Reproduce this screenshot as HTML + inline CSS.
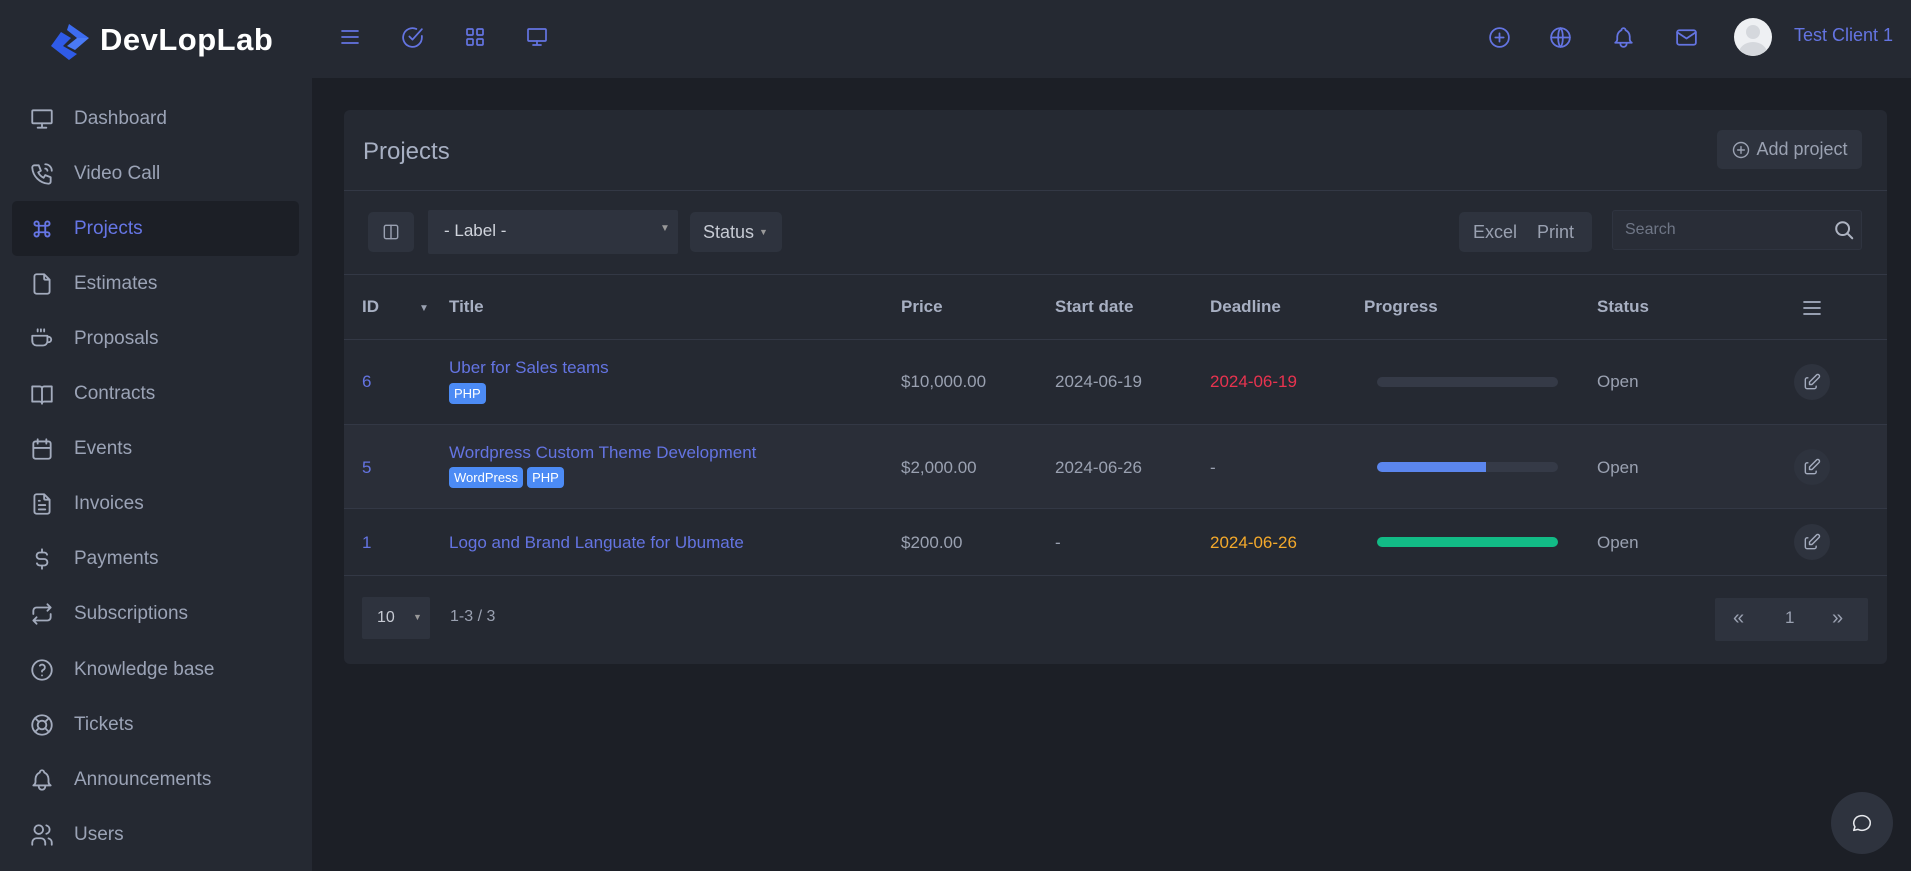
<!DOCTYPE html>
<html><head><meta charset="utf-8"><style>
*{box-sizing:border-box;margin:0;padding:0}
body{width:1911px;height:871px;overflow:hidden;background:#1c1f26;font-family:"Liberation Sans",sans-serif;color:#9aa1b1;position:relative}
.a{position:absolute}
svg{fill:none;stroke:currentColor;stroke-width:1.7;stroke-linecap:round;stroke-linejoin:round}
#top{left:0;top:0;width:1911px;height:78px;background:#252932}
#side{left:0;top:78px;width:312px;height:793px;background:#252932}
.ni{position:absolute;left:12px;width:287px;height:55px;display:flex;align-items:center;font-size:19px;color:#9ba3b6}
.ni svg{width:26px;height:26px;margin-left:17px;margin-right:19px;color:#a3abbd}
.ni.act{background:#1c1f26;border-radius:5px;color:#6676e6}
.ni.act svg{color:#6676e6}
#card{left:344px;top:110px;width:1543px;height:554px;background:#252932;border-radius:6px}
.hl{position:absolute;left:0;width:1543px;height:1px;background:#333845}
.btn{position:absolute;background:#2e333e;border-radius:5px}
.th{position:absolute;top:297px;font-weight:bold;font-size:17px;color:#a7afc2}
.td{position:absolute;font-size:17px;color:#9aa1b1}
.lk{color:#6474e2}
.tag{display:inline-block;background:#4c8bf5;color:#fff;font-size:13px;padding:3px 5px;border-radius:4px;margin-right:4px}
.ic{color:#6474e2}
.bar{position:absolute;left:1377px;width:181px;height:10px;border-radius:5px;background:#353a47;overflow:hidden}
.ed{position:absolute;left:1794px;width:36px;height:36px;border-radius:50%;background:#2e333e;display:flex;align-items:center;justify-content:center;color:#a3abbd}
</style></head><body>
<div id="top" class="a">
 <svg class="a" style="left:49px;top:24px;width:44px;height:36px;stroke:none" viewBox="0 0 44 36"><path d="M20 0L40 14L28 14L18 6Z" fill="#3d6cf0"/><path d="M12 8L22 14L14 22L28 30L20 36L2 22Z" fill="#2f5be8"/><path d="M28 14L40 14L26 26L18 22Z" fill="#4a7af5"/></svg>
 <div class="a" style="left:100px;top:22px;font-size:31px;font-weight:bold;color:#fff;letter-spacing:0.5px">DevLopLab</div>
 <svg class="a ic" style="left:338px;top:25px;width:24px;height:24px" viewBox="0 0 24 24"><path d="M4 6h16M4 12h16M4 18h16"/></svg>
 <svg class="a ic" style="left:400px;top:25px;width:25px;height:25px" viewBox="0 0 24 24"><path d="M21 10.5V12a9 9 0 1 1-5.3-8.2"/><path d="M9 11l3 3 9-10"/></svg>
 <svg class="a ic" style="left:463px;top:25px;width:24px;height:24px" viewBox="0 0 24 24"><rect x="4" y="4" width="6" height="6" rx="1"/><rect x="14" y="4" width="6" height="6" rx="1"/><rect x="4" y="14" width="6" height="6" rx="1"/><rect x="14" y="14" width="6" height="6" rx="1"/></svg>
 <svg class="a ic" style="left:525px;top:25px;width:24px;height:24px" viewBox="0 0 24 24"><rect x="3" y="4" width="18" height="12" rx="1"/><path d="M8 20h8M12 16v4"/></svg>
 <svg class="a ic" style="left:1487px;top:25px;width:25px;height:25px" viewBox="0 0 24 24"><circle cx="12" cy="12" r="9"/><path d="M12 8v8M8 12h8"/></svg>
 <svg class="a ic" style="left:1548px;top:25px;width:25px;height:25px" viewBox="0 0 24 24"><circle cx="12" cy="12" r="9"/><path d="M3 12h18M12 3c3 3 3 15 0 18M12 3c-3 3-3 15 0 18"/></svg>
 <svg class="a ic" style="left:1611px;top:25px;width:25px;height:25px" viewBox="0 0 24 24"><path d="M10 5a2 2 0 1 1 4 0 7 7 0 0 1 4 6v3a4 4 0 0 0 2 3H4a4 4 0 0 0 2-3v-3a7 7 0 0 1 4-6M9 17v1a3 3 0 0 0 6 0v-1"/></svg>
 <svg class="a ic" style="left:1674px;top:25px;width:25px;height:25px" viewBox="0 0 24 24"><rect x="3" y="5" width="18" height="14" rx="2"/><path d="M3 7l9 6 9-6"/></svg>
 <div class="a" style="left:1734px;top:18px;width:38px;height:38px;border-radius:50%;background:#eef0f3;overflow:hidden"><div class="a" style="left:12px;top:7px;width:14px;height:14px;border-radius:50%;background:#d5d8dd"></div><div class="a" style="left:5px;top:24px;width:28px;height:22px;border-radius:50%;background:#d5d8dd"></div></div>
 <div class="a" style="left:1794px;top:25px;font-size:18px;color:#6474e2">Test Client 1</div>
</div>
<div id="side" class="a">
 <div class="ni" style="top:13px"><svg viewBox="0 0 24 24"><rect x="3" y="4" width="18" height="12" rx="1"/><path d="M8 20h8M12 16v4"/></svg>Dashboard</div>
 <div class="ni" style="top:68px"><svg viewBox="0 0 24 24"><path d="M5 4h4l2 5-2.5 1.5a11 11 0 0 0 5 5L15 13l5 2v4a2 2 0 0 1-2 2A16 16 0 0 1 3 6a2 2 0 0 1 2-2M15 3a6 6 0 0 1 6 6M15 7a2 2 0 0 1 2 2"/></svg>Video Call</div>
 <div class="ni act" style="top:123px"><svg viewBox="0 0 24 24"><path d="M7 9a2 2 0 1 1 2-2v10a2 2 0 1 1-2-2h10a2 2 0 1 1-2 2V7a2 2 0 1 1 2 2z"/></svg>Projects</div>
 <div class="ni" style="top:178px"><svg viewBox="0 0 24 24"><path d="M14 3v4a1 1 0 0 0 1 1h4M17 21H7a2 2 0 0 1-2-2V5a2 2 0 0 1 2-2h7l5 5v11a2 2 0 0 1-2 2z"/></svg>Estimates</div>
 <div class="ni" style="top:233px"><svg viewBox="0 0 24 24"><path d="M3 14c.8 0 0 0 0 0V9h14v5a4 4 0 0 1-4 4H7a4 4 0 0 1-4-4zM17 10h1a2.5 2.5 0 0 1 0 5h-1M8 3v2M11 3v2M14 3v2"/></svg>Proposals</div>
 <div class="ni" style="top:288px"><svg viewBox="0 0 24 24"><path d="M3 19V5h7a2 2 0 0 1 2 2 2 2 0 0 1 2-2h7v14h-7a2 2 0 0 0-2 2 2 2 0 0 0-2-2zM12 7v14"/></svg>Contracts</div>
 <div class="ni" style="top:343px"><svg viewBox="0 0 24 24"><rect x="4" y="5" width="16" height="16" rx="2"/><path d="M16 3v4M8 3v4M4 11h16"/></svg>Events</div>
 <div class="ni" style="top:398px"><svg viewBox="0 0 24 24"><path d="M14 3v4a1 1 0 0 0 1 1h4M17 21H7a2 2 0 0 1-2-2V5a2 2 0 0 1 2-2h7l5 5v11a2 2 0 0 1-2 2zM9 9h1M9 13h6M9 17h6"/></svg>Invoices</div>
 <div class="ni" style="top:453px"><svg viewBox="0 0 24 24"><path d="M16.7 8A3 3 0 0 0 14 6h-4a3 3 0 0 0 0 6h4a3 3 0 0 1 0 6h-4a3 3 0 0 1-2.7-2M12 3v3m0 12v3"/></svg>Payments</div>
 <div class="ni" style="top:508px"><svg viewBox="0 0 24 24"><path d="M4 12V9a3 3 0 0 1 3-3h13l-3-3m0 6l3-3M20 12v3a3 3 0 0 1-3 3H4l3 3m0-6l-3 3"/></svg>Subscriptions</div>
 <div class="ni" style="top:564px"><svg viewBox="0 0 24 24"><circle cx="12" cy="12" r="9"/><path d="M12 17v.01M12 13.5a1.5 1.5 0 0 1 1-1.5 2.6 2.6 0 1 0-3-4"/></svg>Knowledge base</div>
 <div class="ni" style="top:619px"><svg viewBox="0 0 24 24"><circle cx="12" cy="12" r="9"/><circle cx="12" cy="12" r="4"/><path d="M15 15l3.35 3.35M9 15l-3.35 3.35M5.65 5.65L9 9M18.35 5.65L15 9"/></svg>Tickets</div>
 <div class="ni" style="top:674px"><svg viewBox="0 0 24 24"><path d="M10 5a2 2 0 1 1 4 0 7 7 0 0 1 4 6v3a4 4 0 0 0 2 3H4a4 4 0 0 0 2-3v-3a7 7 0 0 1 4-6M9 17v1a3 3 0 0 0 6 0v-1"/></svg>Announcements</div>
 <div class="ni" style="top:729px"><svg viewBox="0 0 24 24"><circle cx="9" cy="7" r="4"/><path d="M3 21v-2a4 4 0 0 1 4-4h4a4 4 0 0 1 4 4v2M16 3.13a4 4 0 0 1 0 7.75M21 21v-2a4 4 0 0 0-3-3.85"/></svg>Users</div>
</div>
<div id="card" class="a">
 <div class="a" style="left:19px;top:28px;font-size:24px;color:#a7afc2">Projects</div>
 <div class="btn" style="left:1373px;top:20px;width:145px;height:39px;display:flex;align-items:center;justify-content:center;font-size:18px;color:#9aa1b1"><svg style="width:20px;height:20px;margin-right:5px" viewBox="0 0 24 24"><circle cx="12" cy="12" r="9"/><path d="M12 8v8M8 12h8"/></svg>Add project</div>
 <div class="hl" style="top:80px"></div>
 <div class="btn" style="left:24px;top:102px;width:46px;height:40px;display:flex;align-items:center;justify-content:center;color:#9aa1b1"><svg style="width:20px;height:20px" viewBox="0 0 24 24"><rect x="4" y="4" width="16" height="16" rx="2"/><path d="M12 4v16"/></svg></div>
 <div class="btn" style="left:84px;top:100px;width:250px;height:44px;border-radius:2px;font-size:17px;color:#d0d4dc;padding:11px 0 0 16px">- Label -<span class="a" style="left:232px;top:13px;font-size:10px;color:#999">▼</span></div>
 <div class="btn" style="left:346px;top:102px;width:92px;height:40px;font-size:18px;color:#c6cad3;padding:10px 0 0 13px">Status <span style="font-size:9px;color:#999;vertical-align:3px">▼</span></div>
 <div class="btn" style="left:1115px;top:102px;width:133px;height:40px;font-size:18px;color:#9aa1b1;padding:10px 0 0 14px">Excel&nbsp;&nbsp;&nbsp;&nbsp;Print</div>
 <div class="a" style="left:1268px;top:100px;width:250px;height:40px;background:#292d37;border:1px solid #2f3440;border-radius:3px;font-size:16px;color:#6f7686;padding:10px 0 0 12px">Search<svg class="a" style="left:220px;top:8px;width:22px;height:22px;color:#aeb4c2;stroke-width:2.2" viewBox="0 0 24 24"><circle cx="10.5" cy="10.5" r="7"/><path d="M16 16l5 5"/></svg></div>
 <div class="hl" style="top:164px"></div>
</div>
<div class="th" style="left:362px">ID</div><div class="a" style="left:419px;top:303px;font-size:10px;color:#9aa1b1">▼</div>
<div class="th" style="left:449px">Title</div>
<div class="th" style="left:901px">Price</div>
<div class="th" style="left:1055px">Start date</div>
<div class="th" style="left:1210px">Deadline</div>
<div class="th" style="left:1364px">Progress</div>
<div class="th" style="left:1597px">Status</div>
<svg class="a" style="left:1800px;top:296px;width:24px;height:24px;color:#a7afc2" viewBox="0 0 24 24"><path d="M4 6h16M4 12h16M4 18h16"/></svg>
<div class="a" style="left:344px;top:339px;width:1543px;height:1px;background:#333845"></div>
<div class="a" style="left:344px;top:424px;width:1543px;height:85px;background:#2a2e38;border-top:1px solid #333845;border-bottom:1px solid #333845"></div>
<div class="a" style="left:344px;top:575px;width:1543px;height:1px;background:#333845"></div>
<!-- row1 -->
<div class="td lk" style="left:362px;top:372px">6</div>
<div class="td lk" style="left:449px;top:358px">Uber for Sales teams</div>
<div class="a" style="left:449px;top:383px"><span class="tag">PHP</span></div>
<div class="td" style="left:901px;top:372px">$10,000.00</div>
<div class="td" style="left:1055px;top:372px">2024-06-19</div>
<div class="td" style="left:1210px;top:372px;color:#e8334f">2024-06-19</div>
<div class="bar" style="top:377px"></div>
<div class="td" style="left:1597px;top:372px">Open</div>
<div class="ed" style="top:364px"><svg style="width:20px;height:20px" viewBox="0 0 24 24"><path d="M7 7H6a2 2 0 0 0-2 2v9a2 2 0 0 0 2 2h9a2 2 0 0 0 2-2v-1M20.4 6.6a2.1 2.1 0 0 0-3-3L9 12v3h3z"/></svg></div>
<!-- row2 -->
<div class="td lk" style="left:362px;top:458px">5</div>
<div class="td lk" style="left:449px;top:443px">Wordpress Custom Theme Development</div>
<div class="a" style="left:449px;top:467px"><span class="tag">WordPress</span><span class="tag">PHP</span></div>
<div class="td" style="left:901px;top:458px">$2,000.00</div>
<div class="td" style="left:1055px;top:458px">2024-06-26</div>
<div class="td" style="left:1210px;top:458px">-</div>
<div class="bar" style="top:462px"><div style="width:109px;height:10px;background:#5b86ee"></div></div>
<div class="td" style="left:1597px;top:458px">Open</div>
<div class="ed" style="top:449px"><svg style="width:20px;height:20px" viewBox="0 0 24 24"><path d="M7 7H6a2 2 0 0 0-2 2v9a2 2 0 0 0 2 2h9a2 2 0 0 0 2-2v-1M20.4 6.6a2.1 2.1 0 0 0-3-3L9 12v3h3z"/></svg></div>
<!-- row3 -->
<div class="td lk" style="left:362px;top:533px">1</div>
<div class="td lk" style="left:449px;top:533px">Logo and Brand Languate for Ubumate</div>
<div class="td" style="left:901px;top:533px">$200.00</div>
<div class="td" style="left:1055px;top:533px">-</div>
<div class="td" style="left:1210px;top:533px;color:#f4a92b">2024-06-26</div>
<div class="bar" style="top:537px;background:#12bb86"></div>
<div class="td" style="left:1597px;top:533px">Open</div>
<div class="ed" style="top:524px"><svg style="width:20px;height:20px" viewBox="0 0 24 24"><path d="M7 7H6a2 2 0 0 0-2 2v9a2 2 0 0 0 2 2h9a2 2 0 0 0 2-2v-1M20.4 6.6a2.1 2.1 0 0 0-3-3L9 12v3h3z"/></svg></div>
<!-- footer -->
<div class="a" style="left:362px;top:597px;width:68px;height:42px;background:#2e333e;border-radius:2px;font-size:16px;color:#c6cad3;padding:12px 0 0 15px">10<span class="a" style="left:51px;top:15px;font-size:9px;color:#999">▼</span></div>
<div class="td" style="left:450px;top:608px;font-size:16px">1-3 / 3</div>
<div class="a" style="left:1715px;top:598px;width:153px;height:43px;background:#2e333e;border-radius:2px;font-size:20px;color:#9aa1b1"><span class="a" style="left:18px;top:9px">«</span><span class="a" style="left:70px;top:10px;font-size:17px">1</span><span class="a" style="left:117px;top:9px">»</span></div>
<div class="a" style="left:1831px;top:792px;width:62px;height:62px;border-radius:50%;background:#2e333e;display:flex;align-items:center;justify-content:center;color:#e6e8ec"><svg style="width:22px;height:22px" viewBox="0 0 24 24"><path d="M3 20l1.3-3.9A9 8 0 1 1 7.7 19z"/></svg></div>
</body></html>
